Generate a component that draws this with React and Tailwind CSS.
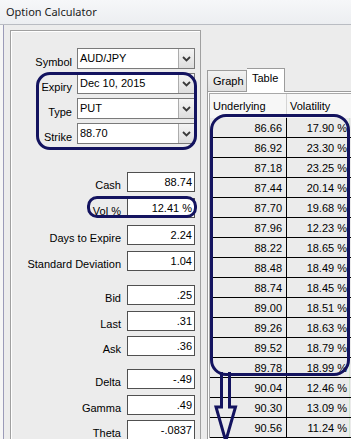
import React from "react";

const FONT = "font-['Liberation_Sans',Arial,sans-serif]";

function Chevron() {
  return (
    <svg width="9" height="6" viewBox="0 0 9 6">
      <path d="M1 1 L4.5 4.5 L8 1" fill="none" stroke="#3a3a3a" strokeWidth="1.8" />
    </svg>
  );
}

function Combo({ label, value, mt }) {
  return (
    <div className={`flex items-end h-[21px] ${mt}`}>
      <div className="w-[61px] text-right leading-[14px]">{label}</div>
      <div className="ml-[5px] w-[118px] h-[21px] flex border border-[#7a7a7a] bg-white">
        <div className="flex-1 pl-[2px] leading-[18px]">{value}</div>
        <div className="w-[16px] border-l border-[#acacac] bg-gradient-to-b from-[#f4f4f4] to-[#dedede] flex items-center justify-center">
          <Chevron />
        </div>
      </div>
    </div>
  );
}

function Field({ label, value, mt }) {
  return (
    <div className={`flex items-end h-[20px] ${mt}`}>
      <div className="w-[110px] text-right leading-[14px] whitespace-nowrap">{label}</div>
      <div className="ml-[6px] w-[68px] h-[20px] border border-[#505050] bg-white text-right pr-[2px] leading-[18px]">
        {value}
      </div>
    </div>
  );
}

const rows = [
  ["86.66", "17.90 %"],
  ["86.92", "23.30 %"],
  ["87.18", "23.25 %"],
  ["87.44", "20.14 %"],
  ["87.70", "19.68 %"],
  ["87.96", "12.23 %"],
  ["88.22", "18.65 %"],
  ["88.48", "18.49 %"],
  ["88.74", "18.45 %"],
  ["89.00", "18.51 %"],
  ["89.26", "18.63 %"],
  ["89.52", "18.79 %"],
  ["89.78", "18.99 %"],
  ["90.04", "12.46 %"],
  ["90.30", "13.09 %"],
  ["90.56", "11.24 %"],
];

export default function App() {
  return (
    <div className={`relative w-[351px] h-[439px] overflow-hidden bg-[#ececec] text-[11px] text-black ${FONT}`}>
      {/* title bar */}
      <div className="h-[25px] bg-gradient-to-b from-[#f6f7f9] to-[#eceef1] border-b border-[#b9bcc2] pl-[6px] leading-[24px] text-[11px] text-[#1a1a1a] font-['Noto_Sans',sans-serif]">
        Option Calculator
      </div>

      <div className="flex h-[414px]">
        <div className="w-[3px] bg-[#f6f6f6]" />
        <div className="w-[1px] bg-[#9b9bb8]" />
        <div className="w-[6px]" />

        {/* left panel */}
        <div className="mt-[5px] w-[191px] h-[420px] border border-[#a0a0a0] shadow-[inset_1px_1px_0_#ffffff] pt-[17px]">
          <Combo label="Symbol" value="AUD/JPY" mt="" />
          <Combo label="Expiry" value="Dec 10, 2015" mt="mt-[4px]" />
          <Combo label="Type" value="PUT" mt="mt-[4px]" />
          <Combo label="Strike" value="88.70" mt="mt-[4px]" />

          <Field label="Cash" value="88.74" mt="mt-[28px]" />
          <Field label="Vol %" value="12.41 %" mt="mt-[6px]" />
          <Field label="Days to Expire" value="2.24" mt="mt-[7px]" />
          <Field label="Standard Deviation" value="1.04" mt="mt-[6px]" />

          <Field label="Bid" value=".25" mt="mt-[14px]" />
          <Field label="Last" value=".31" mt="mt-[6px]" />
          <Field label="Ask" value=".36" mt="mt-[5px]" />

          <Field label="Delta" value="-.49" mt="mt-[13px]" />
          <Field label="Gamma" value=".49" mt="mt-[6px]" />
          <Field label="Theta" value="-.0837" mt="mt-[5px]" />
        </div>

        {/* right panel */}
        <div className="ml-[6px] flex-1 min-w-0">
          <div className="mt-[43px] h-[23px] flex items-end">
            <div className="h-[21px] w-[40px] border border-[#9c9c9c] border-b-0 bg-gradient-to-b from-[#f2f2f2] to-[#e0e0e0] pl-[5px] leading-[20px]">
              Graph
            </div>
            <div className="relative z-10 -mb-[1px] h-[24px] w-[38px] border border-[#9c9c9c] border-b-0 border-l-0 bg-white pl-[5px] leading-[18px]">
              Table
            </div>
          </div>
          <div className="border border-[#9c9c9c] bg-white pt-[1px] pl-[1px] h-[360px] w-[160px]">
            <div className="border-l border-t border-[#a8a8a8] w-[160px]">
              <div className="flex h-[24px] bg-[#f7f7f7] leading-[24px]">
                <div className="w-[77px] pl-[3px] border-r border-[#d4d4d4]">Underlying</div>
                <div className="w-[62px] pl-[3px]">Volatility</div>
              </div>
              {rows.map(([u, v]) => (
                <div key={u} className="flex h-[20px] border-b border-black bg-[#ebebeb] leading-[20px]">
                  <div className="w-[77px] border-r border-black text-right pr-[4px]">{u}</div>
                  <div className="w-[62px] text-right pr-[2px] whitespace-nowrap overflow-hidden">{v}</div>
                  <div className="w-[1px] bg-[#cfe8cf]" />
                </div>
              ))}
            </div>
          </div>
        </div>
      </div>

      {/* annotations */}
      <div className="absolute left-[36px] top-[72px] w-[161px] h-[78px] border-[3px] border-[#13135f] rounded-[14px]" />
      <div className="absolute left-[87px] top-[196px] w-[110px] h-[22px] border-[3px] border-[#13135f] rounded-[10px]" />
      <div className="absolute left-[210px] top-[114px] w-[140px] h-[262px] border-[3px] border-[#13135f] rounded-[16px]" />
      <svg className="absolute left-[210px] top-[372px]" width="35" height="70" viewBox="0 0 35 70">
        <path d="M11.5 0 V35 H6 L15.75 69 L25.5 35 H19.5 V0" fill="none" stroke="#13135f" strokeWidth="3" strokeLinejoin="miter" />
      </svg>
    </div>
  );
}
